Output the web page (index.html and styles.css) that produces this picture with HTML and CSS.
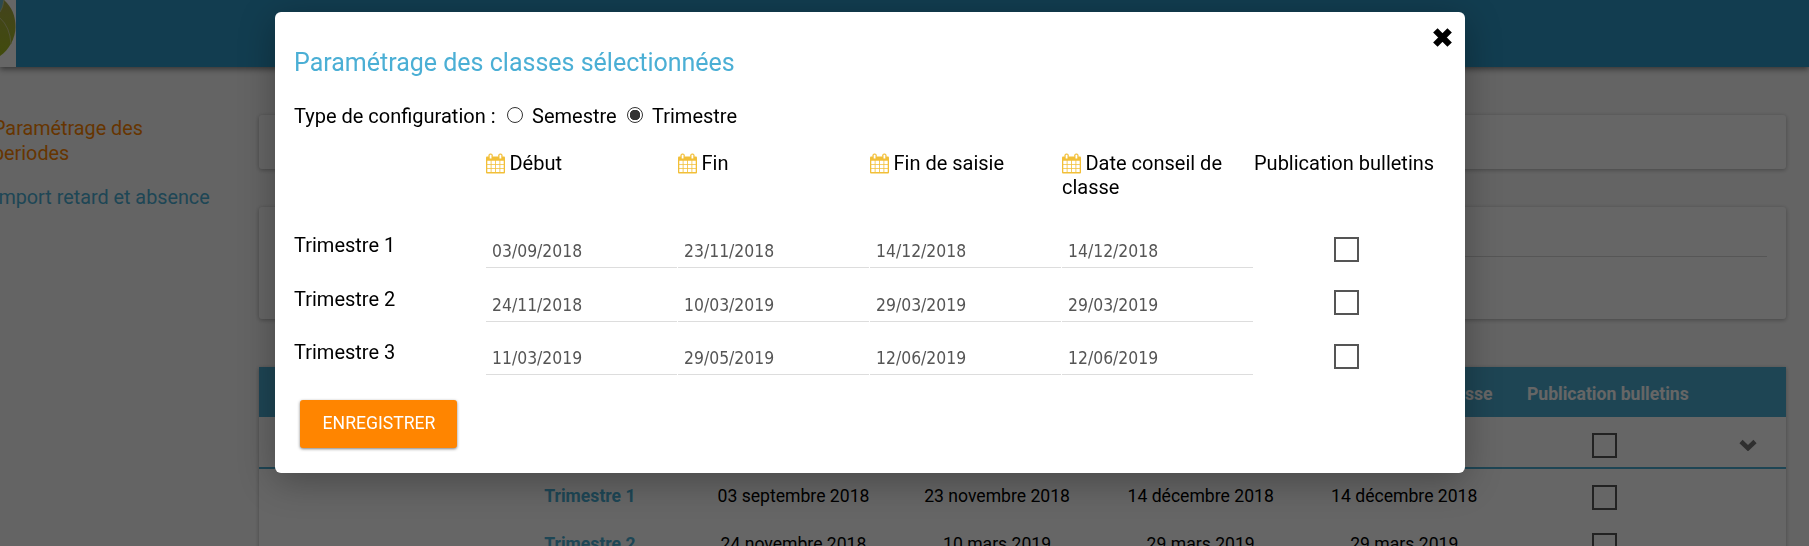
FILE: index.html
```html
<!DOCTYPE html>
<html lang="fr">
<head>
<meta charset="utf-8">
<title>Paramétrage des périodes</title>
<link rel="stylesheet" href="styles.css">
</head>
<body>
<svg class="defs" width="0" height="0">
  <symbol id="calendar" viewBox="0 0 20 21">
    <rect x="0" y="3.500" width="19" height="17" rx="1" fill="#f2bf38"/>
    <rect x="2.500" y="0.400" width="4.200" height="6.400" rx="1.800" fill="#f2bf38"/>
    <rect x="12.300" y="0.400" width="4.200" height="6.400" rx="1.800" fill="#f2bf38"/>
    <path d="M4.600 1.800v3.600M14.400 1.800v3.600" stroke="#fff" stroke-width="1.800"/>
    <path d="M1.300 7.700h3.400v3.200H1.300zM5.500 7.700h3.600v3.200H5.500zM9.900 7.700h3.600v3.200H9.900zM14.300 7.700h3.400v3.200h-3.400zM1.300 11.700h3.400v3.200H1.300zM5.500 11.700h3.600v3.200H5.500zM9.900 11.700h3.600v3.200H9.900zM14.300 11.700h3.400v3.200h-3.400zM1.300 15.700h3.400v3.400H1.300zM5.500 15.700h3.600v3.400H5.500zM9.900 15.700h3.600v3.400H9.900zM14.300 15.700h3.400v3.400h-3.400z" fill="#fff"/>
  </symbol>
</svg>

<div class="page">
  <header class="topbar">
    <svg class="logo" viewBox="0 0 16 67">
      <defs><linearGradient id="leaf" x1="0" y1="0" x2="0" y2="1"><stop offset="0" stop-color="#a8a848"/><stop offset="1" stop-color="#a4bc20"/></linearGradient></defs>
      <rect width="16" height="67" fill="#fff"/>
      <path d="M0 0H4C12 7 15.500 16 15.500 27S9 50 0 56Z" fill="url(#leaf)"/>
      <path d="M0 0H4Q3 8 0 12Z" fill="#70b8c8"/>
      <path d="M4 0Q3 8 0 12M0 18Q10 27 11 44" fill="none" stroke="#c8cc8a"/>
    </svg>
  </header>
  <div class="columns">
    <nav class="side">
      <a class="active">Paramétrage des<br>periodes</a>
      <a>Import retard et absence</a>
    </nav>
    <main class="main">
      <section class="card filter"></section>
      <section class="card detail"><hr></section>
      <section class="card periods">
        <div class="prow phead"><span></span><span></span><span>Début</span><span>Fin</span><span>Fin de saisie</span><span>Date conseil de classe</span><span>Publication bulletins</span><span></span></div>
        <div class="prow group"><span></span><span></span><span></span><span></span><span></span><span></span><span><i class="check"></i></span><span><svg class="chevron" viewBox="0 0 18 12"><path d="M2 2.500 9 9.200 16 2.500" fill="none" stroke="#777" stroke-width="4.600"/></svg></span></div>
        <div class="prow period"><span></span><b>Trimestre 1</b><span>03 septembre 2018</span><span>23 novembre 2018</span><span>14 décembre 2018</span><span>14 décembre 2018</span><span><i class="check"></i></span><span></span></div>
        <div class="prow period"><span></span><b>Trimestre 2</b><span>24 novembre 2018</span><span>10 mars 2019</span><span>29 mars 2019</span><span>29 mars 2019</span><span><i class="check"></i></span><span></span></div>
      </section>
    </main>
  </div>
</div>

<div class="overlay"></div>
<div class="modal">
  <svg class="close" viewBox="0 0 20 20"><path d="M3.200 3.200 16.800 16.800M16.800 3.200 3.200 16.800" stroke="#000" stroke-width="6"/></svg>
  <h2>Paramétrage des classes sélectionnées</h2>
  <div class="type"><span class="lead">Type de configuration :</span><input type="radio" name="t"><label class="sem">Semestre</label><input type="radio" name="t" checked><label>Trimestre</label></div>
  <div class="grid titles">
    <span></span>
    <span><svg class="cal"><use href="#calendar"/></svg> Début</span>
    <span><svg class="cal"><use href="#calendar"/></svg> Fin</span>
    <span><svg class="cal"><use href="#calendar"/></svg> Fin de saisie</span>
    <span><svg class="cal"><use href="#calendar"/></svg> Date conseil de classe</span>
    <span class="pub">Publication bulletins</span>
  </div>
  <div class="grid line"><span>Trimestre 1</span><span class="date">03/09/2018</span><span class="date">23/11/2018</span><span class="date">14/12/2018</span><span class="date">14/12/2018</span><i class="check"></i></div>
  <div class="grid line"><span>Trimestre 2</span><span class="date">24/11/2018</span><span class="date">10/03/2019</span><span class="date">29/03/2019</span><span class="date">29/03/2019</span><i class="check second"></i></div>
  <div class="grid line"><span>Trimestre 3</span><span class="date">11/03/2019</span><span class="date">29/05/2019</span><span class="date">12/06/2019</span><span class="date">12/06/2019</span><i class="check"></i></div>
  <button class="save">ENREGISTRER</button>
</div>
</body>
</html>
```
FILE: styles.css
```css
* { box-sizing: border-box; }
html, body { margin: 0; height: 546px; overflow: hidden; }
body { font: 20px/24px Roboto, sans-serif; color: #000; background: #fafafa; }
.defs { position: absolute; }
.page { height: 546px; overflow: hidden; }
.topbar { height: 67px; background: #2d99c7; box-shadow: 0 2px 6px rgba(0,0,0,.5); }
.logo { display: block; width: 16px; height: 67px; }
.columns { display: flex; padding-top: 48px; }
.side { width: 259px; margin: 0; padding-top: 1px; white-space: nowrap; color: #4bafd5; font-size: 19.8px; }
.side a { display: block; margin-left: -7px; line-height: 25px; margin-bottom: 19px; }
.side .active { color: #ff8500; }
.main { width: 1527px; }
.card { background: #fff; border-radius: 3px; box-shadow: 0 1px 4px rgba(0,0,0,.3); }
.filter { height: 54px; }
.detail { height: 112px; margin-top: 38px; padding: 49px 19px 0; }
.detail hr { margin: 0; border: 0; border-top: 1px solid #d6d6d6; }
.periods { margin-top: 48px; height: 400px; border-radius: 0; }
.prow { display: grid; grid-template-columns: 229.1px repeat(6, 203.6px) 1fr; height: 48px; align-items: center; text-align: center; font-size: 17.6px; white-space: nowrap; }
.prow b { color: #4bafd5; }
.phead { height: 50px; background: #4bacd2; color: #fff; font-weight: 700; padding-top: 4px; }
.group { height: 52px; border-bottom: 2px solid #4bacd2; padding-top: 3px; }
.period { padding-top: 6px; }
.check { display: block; width: 25px; height: 25px; border: 2px solid #555; margin: 0 auto; }
.prow .check { position: relative; left: -3.500px; top: 1px; }
.group .check { top: 2px; }
.chevron { display: block; width: 18px; height: 12px; margin: 2px 0 0 29px; }
.overlay { position: fixed; inset: 0; background: rgba(0,0,0,.6); }
.modal { position: absolute; left: 275px; top: 12px; width: 1190px; height: 461px; padding: 36px 19px 0; background: #fff; border-radius: 6px; box-shadow: 0 8px 36px rgba(0,0,0,.3); }
.close { position: absolute; right: 12px; top: 15px; width: 21px; height: 21px; }
h2 { margin: 0; font-weight: 400; font-size: 25px; line-height: 30px; color: #4bafd5; }
.type { display: flex; align-items: center; height: 24px; margin-top: 26px; }
.lead { width: 212px; white-space: nowrap; }
.type input { appearance: none; width: 16px; height: 16px; margin: 0 9px 0 1px; border: 1px solid #333; border-radius: 50%; position: relative; top: -1px; }
.type input:checked { background: radial-gradient(circle, #333 5px, #fff 5.500px); }
.sem { width: 94px; }
.grid { display: grid; grid-template-columns: repeat(6, 192px); }
.titles { height: 80px; margin-top: 23px; }
.cal { width: 20px; height: 21px; margin-right: -1.500px; vertical-align: -4px; }
.pub { white-space: nowrap; }
.line { height: 53.500px; }
.line > span:first-child { padding-top: 2px; }
.date { height: 37px; margin-right: 1px; padding: 8px 6px 0; border-bottom: 1px solid #ddd; font: 17.400px/24px "DejaVu Sans Condensed", "DejaVu Sans", sans-serif; font-stretch: condensed; color: #555; }
.line .check { margin: 6px 0 0 80px; }
.line .second { margin-top: 5px; }
.save { display: block; width: 157px; height: 48px; margin: 8px 0 0 6px; padding: 0 0 1px 1px; border: 0; border-radius: 3px; background: #ff8500; color: #fff; font: 17.600px/24px Roboto, sans-serif; box-shadow: 0 1px 3px rgba(0,0,0,.5); }
```
